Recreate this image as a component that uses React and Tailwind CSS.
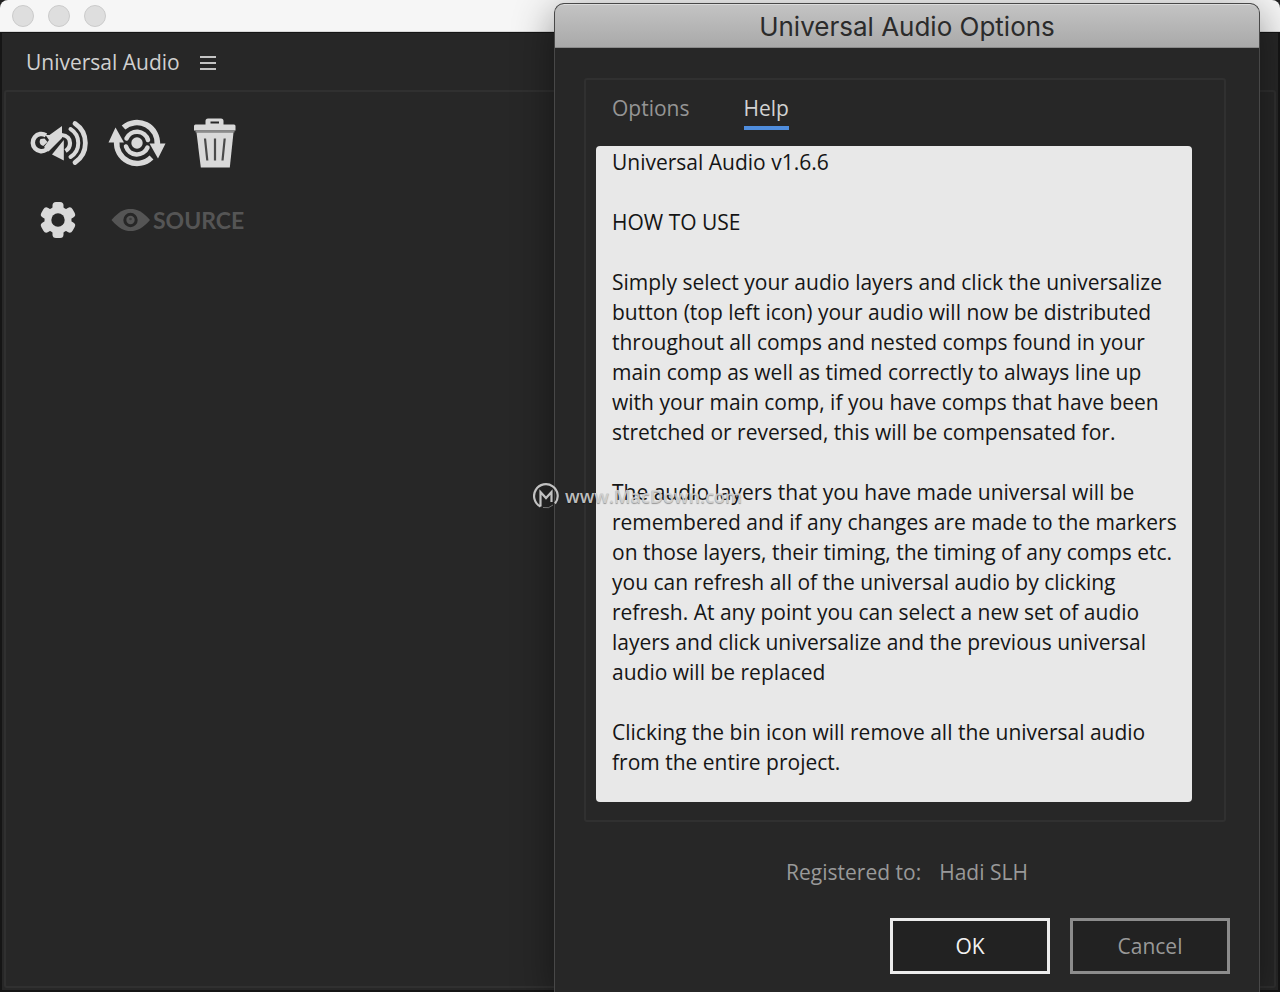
import { useState } from "react";

const helpText = `Universal Audio v1.6.6

HOW TO USE

Simply select your audio layers and click the universalize
button (top left icon) your audio will now be distributed
throughout all comps and nested comps found in your
main comp as well as timed correctly to always line up
with your main comp, if you have comps that have been
stretched or reversed, this will be compensated for.

The audio layers that you have made universal will be
remembered and if any changes are made to the markers
on those layers, their timing, the timing of any comps etc.
you can refresh all of the universal audio by clicking
refresh. At any point you can select a new set of audio
layers and click universalize and the previous universal
audio will be replaced

Clicking the bin icon will remove all the universal audio
from the entire project.`;

const UniversalizeIcon = () => (
  <svg viewBox="0 0 60 52" className="w-[60px] h-[52px]" fill="none" stroke="#d9d9d9">
    {/* hook */}
    <path d="M17 18.300A8.600 8.600 0 1 0 17.500 32.500L32 17" strokeWidth="4.500" />
    <path d="M11.500 22c-1.800 3-.6 6.300 2.800 7l4.200-4-3-3.500z" fill="#d9d9d9" stroke="none" />
    {/* speaker */}
    <path d="M33 9V21L19.500 34.500L15 30L20 23L16.500 18L20.500 18z" fill="#d9d9d9" stroke="none" />
    <path d="M34.800 23V43.500L23 37.500L27 32.500z" fill="#d9d9d9" stroke="none" />
    <path d="M32.500 18C38.500 18.500 41 22 41 26S39 32.500 36.500 34" strokeWidth="4.200" />
    {/* waves */}
    <path d="M41.500 12A16.500 16.500 0 0 1 41.500 40" strokeWidth="4" strokeLinecap="round" />
    <path d="M46 6.500A23.500 23.500 0 0 1 46 45.500" strokeWidth="4.800" strokeLinecap="round" />
  </svg>
);

const RefreshIcon = () => (
  <svg viewBox="0 0 60 52" className="w-[60px] h-[52px]" fill="none" stroke="#d9d9d9">
    <circle cx="30" cy="26" r="5.700" fill="#d9d9d9" stroke="none" />
    <path d="M19.500 21.500A11.500 11.500 0 0 1 41 23" strokeWidth="4.500" strokeLinecap="round" />
    <path d="M19 29.500A11.500 11.500 0 0 0 40.500 30.500" strokeWidth="4.500" strokeLinecap="round" />
    <path d="M16.500 10.500A20.500 20.500 0 0 1 50.300 28" strokeWidth="5.500" />
    <path d="M9.700 24A20.500 20.500 0 0 0 44.500 40.500" strokeWidth="5.500" />
    <path d="M8.500 10.500L17 25.500H1.500z" fill="#d9d9d9" stroke="none" />
    <path d="M51 41.500L42.500 26.500H58.500z" fill="#d9d9d9" stroke="none" />
  </svg>
);

const TrashIcon = () => (
  <svg viewBox="0 0 60 52" className="w-[60px] h-[52px]">
    <path
      d="M20.500 7.500V4Q20.500 1.500 23 1.500H36Q38.500 1.500 38.500 4V7.500H49Q50.500 7.500 50.500 9V13.500H9V9Q9 7.500 10.500 7.500zM25.500 4.500V6.500H34V4.500z"
      fill="#d9d9d9"
      fillRule="evenodd"
    />
    <path d="M10.500 13.500H49.500V15.500H10.500z" fill="#8b8b8b" />
    <path d="M11.500 15.500H48.500L44.800 50.500H15.800z" fill="#d9d9d9" />
    <path d="M20 21.500L22.300 43.500M30 21.500V43.500M39.700 21.500L37.500 43.500" stroke="#4a4a4a" strokeWidth="2.200" />
  </svg>
);

const GearIcon = () => (
  <svg viewBox="0 0 60 52" className="w-[60px] h-[52px]">
    <g fill="#d9d9d9">
      <circle cx="29" cy="26" r="13.500" />
      {[0, 60, 120].map((angle) => (
        <rect key={angle} x="23.500" y="8" width="11" height="36" rx="3.500" transform={`rotate(${angle} 29 26)`} />
      ))}
    </g>
    <circle cx="29" cy="26" r="6.700" fill="#272727" />
  </svg>
);

const EyeIcon = () => (
  <svg viewBox="0 0 40 24" className="w-10 h-6">
    <path d="M.5 12C8 3.500 13 1 19.500 1S31.500 3.500 39 12C31.500 20.500 26 23 19.500 23S8 20.500.5 12z" fill="#555" />
    <circle cx="19.500" cy="12" r="7.200" fill="#272727" />
    <circle cx="19.500" cy="12" r="4.200" fill="#555" />
    <circle cx="19.500" cy="11" r="1.300" fill="#3c3c3c" />
  </svg>
);

const tools = [
  { name: "Universalize", icon: UniversalizeIcon },
  { name: "Refresh", icon: RefreshIcon },
  { name: "Remove universal audio", icon: TrashIcon },
];

const MainWindow = () => (
  <main className="flex min-h-screen flex-col">
    <div className="flex h-8 items-center gap-3.5 rounded-t-lg border-b border-[#d8d8d8] bg-[#f6f6f6] px-3">
      {["Close", "Minimize", "Zoom"].map((name) => (
        <button key={name} aria-label={name} className="size-[22px] rounded-full border border-[#cbcbcb] bg-[#dedede]" />
      ))}
    </div>
    <div className="flex flex-1 flex-col border-2 border-t border-[#151515] bg-[#272727] px-0.5 pb-0.5">
      <header className="flex h-[57px] items-center gap-5 px-[22px]">
        <h1 className="text-[#d0d0d0]">Universal Audio</h1>
        <button aria-label="Panel menu" className="flex flex-col gap-1 pt-0.5">
          <span className="h-0.5 w-4 bg-[#c4c4c4]" />
          <span className="h-0.5 w-4 bg-[#c4c4c4]" />
          <span className="h-0.5 w-4 bg-[#c4c4c4]" />
        </button>
      </header>
      <section className="flex flex-1 flex-col gap-[25px] rounded-[3px] border-2 border-[#303030] px-[23px] py-[25px]">
        <div className="flex gap-[18px]">
          {tools.map((tool) => (
            <button key={tool.name} aria-label={tool.name}>
              <tool.icon />
            </button>
          ))}
        </div>
        <div className="flex items-center gap-[22px]">
          <button aria-label="Settings">
            <GearIcon />
          </button>
          <button className="flex items-center gap-0.5 font-['Lato',sans-serif] text-[23px] font-bold text-[#555]">
            <EyeIcon />
            SOURCE
          </button>
        </div>
      </section>
    </div>
  </main>
);

const OptionsDialog = () => {
  const [tab, setTab] = useState("Help");

  return (
    <div
      role="dialog"
      aria-labelledby="dialog-title"
      className="absolute top-[3px] right-5 bottom-0 left-[554px] flex flex-col rounded-t-[10px] border border-b-0 border-[#484848] bg-[#272727] shadow-[0_10px_40px_rgba(0,0,0,0.45)]"
    >
      <h2
        id="dialog-title"
        className="flex h-11 shrink-0 items-center justify-center rounded-t-[9px] border-t border-b border-t-[#dcdcdc] border-b-[#8a8a8a] bg-linear-to-b from-[#c3c3c3] to-[#a9a9a9] pt-0.5 font-['Inter',sans-serif] text-[26px] text-[#2b2b2b]"
      >
        Universal Audio Options
      </h2>

      <div className="mt-[30px] mr-[33px] ml-[29px] rounded-[3px] border-2 border-[#303030] pr-8 pb-[18px] pl-2.5">
        <div role="tablist" className="flex h-[66px] items-start gap-[54px] px-4 pt-[13px]">
          {["Options", "Help"].map((name) => (
            <button
              key={name}
              role="tab"
              aria-selected={tab === name}
              onClick={() => setTab(name)}
              className={
                tab === name
                  ? "border-b-4 border-[#4f8ddd] pb-[3px] text-[#d2d2d2]"
                  : "border-b-4 border-transparent pb-[3px] text-[#959595]"
              }
            >
              {name}
            </button>
          ))}
        </div>
        <div className="min-h-[656px] rounded bg-[#e8e8e8] px-4 pt-px pb-[25px] whitespace-pre text-[#151515]">
          {tab === "Help" && helpText}
        </div>
      </div>

      <p className="mt-[35px] flex justify-center gap-[18px] text-[#999]">
        <span>Registered to:</span>
        <span>Hadi SLH</span>
      </p>

      <div className="mt-[31px] mr-[29px] flex justify-end gap-5">
        <button className="h-14 w-40 border-3 border-[#ececec] bg-[#222] text-[#f2f2f2]">OK</button>
        <button className="h-14 w-40 border-3 border-[#8c8c8c] bg-[#222] text-[#999]">Cancel</button>
      </div>
    </div>
  );
};

const Watermark = () => (
  <div className="pointer-events-none absolute top-[482px] left-[533px] flex items-center gap-1.5 text-[#d4d4d4]/90">
    <svg viewBox="0 0 26 26" className="size-[26px]" fill="none" stroke="currentColor" strokeWidth="2.200">
      <path d="M7.500 23.500A11.800 11.800 0 1 1 22 20.500" />
      <path d="M7.500 23.500V9L13 15L18.500 9V19" />
      <path d="M10 24.500Q16 26 20 22" strokeWidth="1" opacity=".5" />
    </svg>
    <span className="text-lg font-semibold [text-shadow:0_1px_1px_rgba(0,0,0,0.35)]">
      www.MacDown.com
    </span>
  </div>
);

const App = () => (
  <div className="relative min-h-screen bg-[#222] font-['Open_Sans',sans-serif] text-[21px] leading-[30px]">
    <MainWindow />
    <OptionsDialog />
    <Watermark />
  </div>
);

export default App;
